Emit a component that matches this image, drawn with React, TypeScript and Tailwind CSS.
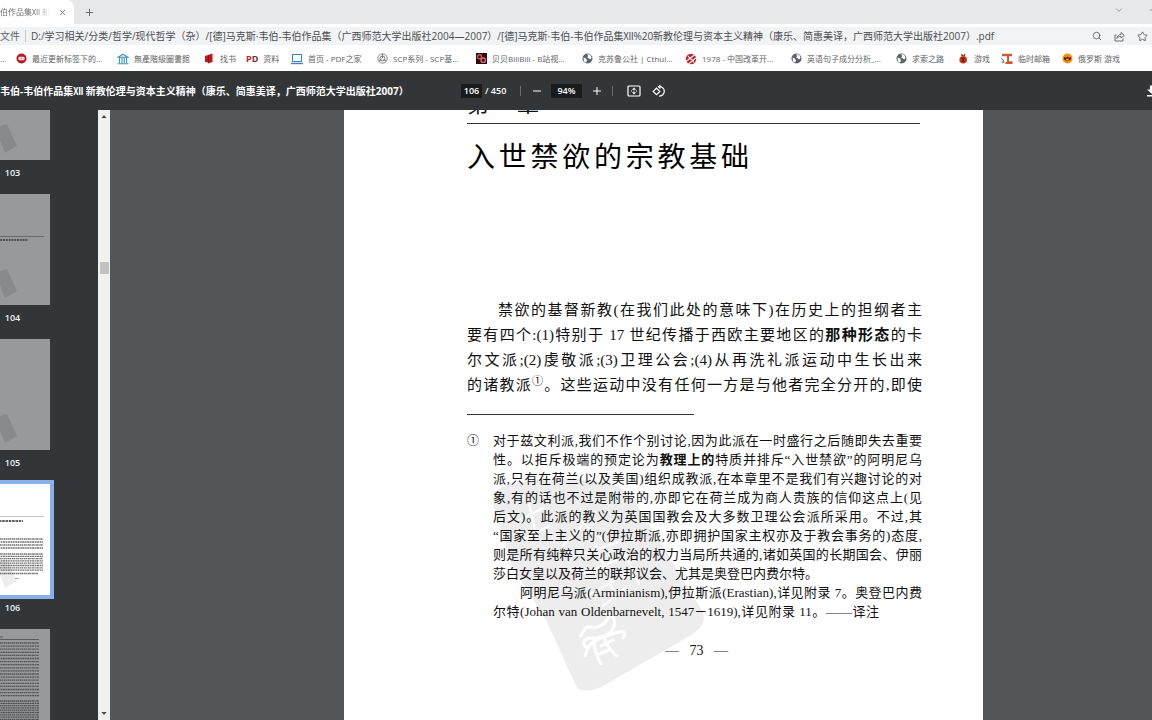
import type { ReactNode } from "react";
import { ChevronDown, Minus, Plus, Search, Star, X } from "lucide-react";

const UI_FONT = "font-['Open_Sans','Noto_Sans_CJK_SC',sans-serif]";
const BOOK_FONT = "font-['Liberation_Serif','Noto_Sans_CJK_SC',serif]";

function Globe() {
  return (
    <svg viewBox="0 0 11 11" className="size-[11px]">
      <circle cx="5.5" cy="5.5" r="5" fill="#5f6368" />
      <path d="M1.5 4.5 4 5.5 5 7.5 4 9.6 2 8.4ZM5 1.2 8 1.6 9.6 4.4 8.4 6.6 7 5.6 5.2 4.6 6.2 3Z" fill="#fff" />
    </svg>
  );
}

const icons: Record<string, ReactNode> = {
  globe: <Globe />,
  stop: (
    <svg viewBox="0 0 11 11" className="size-[11px]">
      <circle cx="5.5" cy="5.5" r="5" fill="#b3191f" />
      <rect x="2.5" y="3.8" width="6" height="3.4" rx="1" fill="#fff" />
      <path d="M4 4.6v1.8M5.5 4.6v1.8M7 4.6v1.8" stroke="#b3191f" strokeWidth=".5" />
    </svg>
  ),
  library: (
    <svg viewBox="0 0 12 12" className="size-3" fill="none" stroke="#3d94c4" strokeWidth="1.1">
      <path d="M1 4.2 6 1.2l5 3zM2.5 4.5V10M5 4.5V10M7.2 4.5V10M9.6 4.5V10M.5 10.8h11" />
    </svg>
  ),
  book: (
    <svg viewBox="0 0 11 11" className="size-[11px]">
      <path d="M1 3 4 2v7.500L1 9ZM4 2 8.500.5v8.500L4 10.500Z" fill="#c4161c" />
      <path d="M4 2.600l1 .5v6l-1-.4z" fill="#7c0f12" />
    </svg>
  ),
  laptop: (
    <svg viewBox="0 0 12 12" className="size-3" fill="none" stroke="#3a84b8">
      <rect x="1.5" y="1.5" width="9" height="7" />
      <path d="M0 10.5h12" strokeWidth="1.4" />
    </svg>
  ),
  scp: (
    <svg viewBox="0 0 11 11" className="size-[11px]" fill="none" stroke="#6b6b6b">
      <circle cx="5.5" cy="5.5" r="4.7" strokeWidth=".8" />
      <circle cx="5.5" cy="5.5" r="2.5" strokeWidth=".9" />
      <path d="M5.5 1v4M1.8 8l3-2M9.2 8l-3-2" strokeWidth=".9" />
    </svg>
  ),
  bili: (
    <svg viewBox="0 0 11 11" className="size-[11px]">
      <rect width="11" height="11" fill="#2a0d10" />
      <circle cx="3.5" cy="3.8" r="2" fill="none" stroke="#d2545b" strokeWidth="1.4" />
      <circle cx="7.2" cy="7.2" r="2.2" fill="none" stroke="#e26b6f" strokeWidth="1.4" />
    </svg>
  ),
  reform: (
    <svg viewBox="0 0 12 12" className="size-3">
      <circle cx="6" cy="6" r="5.2" fill="#c2202b" />
      <path d="M1 8.5 10 1.5M3.5 11 11 4.8M3 3l3 3.4M6.5 6 9 9.5" stroke="#fff" strokeWidth="1.1" />
    </svg>
  ),
  game: (
    <svg viewBox="0 0 11 11" className="size-[11px]">
      <path d="M3 .4 5.200 2 7.400.4 7 3H3.400Z" fill="#b9311c" />
      <circle cx="5.2" cy="6.8" r="3.800" fill="#c5371d" />
      <path d="M3.4 5.6h3.6M5.2 4.4v4.2M3.5 8.2h3.4" stroke="#5c1208" strokeWidth=".8" />
    </svg>
  ),
  mail: (
    <svg viewBox="0 0 12 12" className="size-3">
      <path d="M1 .8h10v2.4H8v5h3.5V11H4.4V9H6V3.2H1Z" fill="#cf5b32" />
      <path d="M.4 5.2 3 8M.4 9h3" stroke="#456" strokeWidth="1" />
    </svg>
  ),
  russia: (
    <svg viewBox="0 0 11 11" className="size-[11px]">
      <circle cx="5.5" cy="5.5" r="5" fill="#f0920f" />
      <path d="M2 4 4 4.800 5.5 3.4 7 4.8 9 4v2.300L7.400 7.600H3.600L2 6.300Z" fill="#6d1608" />
      <path d="M4.2 6.3h2.6" stroke="#ffd24a" strokeWidth="1" />
    </svg>
  ),
};

const bookmarks = [
  { icon: "stop", title: "最近更新标签下的...", width: "w-[101px]" },
  { icon: "library", title: "無產階級圖書館", width: "w-[87px]" },
  { icon: "book", title: "找书", width: "w-[42px]" },
  { icon: "pd", title: "资料", width: "w-[45px]" },
  { icon: "laptop", title: "首页 - PDF之家", width: "w-[86px]" },
  { icon: "scp", title: "SCP系列 - SCP基...", width: "w-[99px]" },
  { icon: "bili", title: "贝贝BiliBili - B站视...", width: "w-[106px]" },
  { icon: "globe", title: "克苏鲁公社 | Cthul...", width: "w-[103px]" },
  { icon: "reform", title: "1978 - 中国改革开...", width: "w-[106px]" },
  { icon: "globe", title: "英语句子成分分析_...", width: "w-[105px]" },
  { icon: "globe", title: "求索之路", width: "w-[62px]" },
  { icon: "game", title: "游戏", width: "w-[43px]" },
  { icon: "mail", title: "临时邮箱", width: "w-[61px]" },
  { icon: "russia", title: "俄罗斯 游戏", width: "w-[66px]" },
];

function BrowserChrome() {
  return (
    <header className="shrink-0 bg-white leading-4 text-[#5f6368]">
      <div className="flex h-6 items-end bg-[#e7e8ea]">
        <div className="flex h-6 w-[74px] items-center justify-between rounded-tr-lg bg-white pr-[7px]">
          <span className="bg-linear-to-r from-[#63666a] from-70% to-white bg-clip-text text-[8px] whitespace-nowrap text-transparent">
            伯作品集Ⅻ 新
          </span>
          <button aria-label="关闭标签页"><X className="size-[9px]" /></button>
        </div>
        <button aria-label="新标签页" className="ml-2.5 flex h-6 items-center"><Plus className="size-[11px]" /></button>
        <div className="ml-auto flex h-6 items-center gap-6 overflow-hidden pb-1 text-[#8a8d91]">
          <button aria-label="搜索标签页"><ChevronDown className="size-2.5" /></button>
          <button aria-label="最小化" className="-mr-1.5"><Minus className="size-2.5" /></button>
        </div>
      </div>

      <div className="flex h-[22px] items-center pt-0.5">
        <div className="flex h-[18px] min-w-0 flex-1 items-center bg-[#f1f3f4] text-[10px]">
          <span className="w-[25px] shrink-0">文件</span>
          <span className="h-3 w-px shrink-0 bg-[#c4c7ca]" />
          <input
            aria-label="地址"
            readOnly
            className="h-4 min-w-0 flex-1 bg-transparent pl-[5px] text-[#4a4d51] outline-none"
            value="D:/学习相关/分类/哲学/现代哲学（杂）/[德]马克斯·韦伯-韦伯作品集（广西师范大学出版社2004—2007）/[德]马克斯·韦伯-韦伯作品集Ⅻ%20新教伦理与资本主义精神（康乐、简惠美译，广西师范大学出版社2007）.pdf"
          />
          <div className="flex shrink-0 items-center gap-3 pr-1">
            <button aria-label="缩放"><Search className="size-2.5" /></button>
            <button aria-label="分享">
              <svg viewBox="0 0 11 11" className="size-[11px]" fill="none" stroke="currentColor" strokeWidth=".9">
                <path d="M2.5 4H1v6h8V7.5M3 7.5C3.2 5 4.6 3.5 7 3.5V1.5L10.3 4.4 7 7V5.3C5.2 5.3 4 6 3 7.5Z" />
              </svg>
            </button>
            <button aria-label="收藏"><Star className="size-[11px]" /></button>
          </div>
        </div>
      </div>

      <nav className="flex h-[25px] items-center overflow-hidden text-[8px] whitespace-nowrap">
        <span className="w-4 shrink-0">...</span>
        {bookmarks.map((b) => (
          <a key={b.title} href="#" className={`flex shrink-0 items-center gap-[5px] ${b.width}`}>
            {b.icon === "pd" ? (
              <span className="text-[9px] font-bold"><span className="text-[#c2202b]">P</span><span className="text-[#7c2a35]">D</span></span>
            ) : (
              icons[b.icon]
            )}
            {b.title}
          </a>
        ))}
      </nav>
    </header>
  );
}

function PdfToolbar() {
  return (
    <div className="flex h-[39px] shrink-0 items-center bg-[#323639] text-[9px] leading-4 font-semibold text-white">
      <h1 className="w-[461px] shrink-0 text-[10px] font-bold whitespace-nowrap">
        韦伯-韦伯作品集Ⅻ 新教伦理与资本主义精神（康乐、简惠美译，广西师范大学出版社2007）
      </h1>
      <input aria-label="页码" defaultValue="106" className="h-3.5 w-[21px] bg-[#191b1c] text-center outline-none" />
      <span className="w-[38px] pl-[3px]">/ 450</span>
      <span className="h-2.5 w-px bg-[#6b6e70]" />
      <button aria-label="缩小" className="ml-2.5"><Minus className="size-3" /></button>
      <input aria-label="缩放比例" defaultValue="94%" className="ml-2 h-3.5 w-[31px] bg-[#191b1c] text-center outline-none" />
      <button aria-label="放大" className="ml-[9px]"><Plus className="size-3" /></button>
      <span className="ml-[9px] h-2.5 w-px bg-[#6b6e70]" />
      <button aria-label="适合页面大小" className="ml-[14px]">
        <svg viewBox="0 0 14 12" className="h-3 w-3.5">
          <rect x="1" y="1" width="12" height="10" rx="1" fill="none" stroke="#fff" strokeWidth="1.2" />
          <path d="M7 2.4 9 4.8H5ZM7 9.6 5 7.2h4ZM4 5.5h1v1H4ZM9 5.5h1v1H9ZM6.5 5.5h1v1h-1Z" fill="#fff" />
        </svg>
      </button>
      <button aria-label="逆时针旋转" className="ml-[11px]">
        <svg viewBox="0 0 14 14" className="size-3.5" fill="none" stroke="#fff" strokeWidth="1.2">
          <path d="M4.5 4.2 7.8 7.4 4.5 10.6 1.2 7.4ZM6.4 2.8A4.7 4.7 0 1 1 7 12" />
          <path d="M8.4.4 5.6 2.8 8.4 5.2Z" fill="#fff" stroke="none" />
        </svg>
      </button>
      <button aria-label="下载" className="-mr-1.5 ml-auto">
        <svg viewBox="0 0 12 12" className="size-3" fill="#fff">
          <path d="M4 .5h4v4h3L6 9 1 4.500h3ZM1 10h10v1.500H1Z" />
        </svg>
      </button>
    </div>
  );
}

function TextRows({ y, count, step, right = 68, opacity = 0.6 }: { y: number; count: number; step: number; right?: number; opacity?: number }) {
  return (
    <g stroke="#111" strokeWidth="1.3" opacity={opacity}>
      {Array.from({ length: count }, (_, i) => (
        <path key={i} d={`M6 ${y + i * step}H${right}`} strokeDasharray={i % 2 ? "1.6 .5 2.2 .6" : "1.3 .6 1.8 .4"} />
      ))}
    </g>
  );
}

const thumbnails = [
  { page: 103, art: null, mark: true },
  {
    page: 104,
    mark: true,
    art: (
      <g stroke="#222">
        <path d="M6 42.500h63" strokeWidth=".4" />
        <path d="M14 46h39" strokeWidth="2" strokeDasharray="2 .8" opacity=".6" />
      </g>
    ),
  },
  { page: 105, art: null, mark: true },
  {
    page: 106,
    mark: true,
    art: (
      <>
        <path d="M6 32.500h63" stroke="#888" strokeWidth=".5" />
        <path d="M14 37h34" stroke="#222" strokeWidth="2.200" strokeDasharray="2.600 .7" opacity=".7" />
        <TextRows y={55} count={4} step={3} />
        <TextRows y={70} count={8} step={2.3} />
        <TextRows y={89.500} count={1} step={2} right={63} />
        <path d="M40 94.500h4" stroke="#888" strokeWidth=".7" />
      </>
    ),
  },
  {
    page: 107,
    mark: false,
    art: (
      <>
        <path d="M6 8h22M6 10.500h58" stroke="#333" strokeWidth=".6" />
        <TextRows y={14} count={18} step={3.1} right={64} opacity={0.5} />
        <TextRows y={72} count={12} step={2.300} right={64} opacity={0.55} />
      </>
    ),
  },
];

function Sidebar() {
  return (
    <>
      <nav aria-label="缩略图" className="flex w-[98px] shrink-0 flex-col overflow-hidden bg-[#323639]">
        {thumbnails.map((t) => {
          const active = t.page === 106;
          return (
            <button
              key={t.page}
              className={`-ml-[25px] block w-[75px] shrink-0 text-[9px] font-semibold text-[#f1f1f1] ${t.page === 103 ? "-mt-[61px]" : ""}`}
            >
              <svg
                viewBox="0 0 75 111"
                className={`block h-[111px] w-[75px] ${active ? "bg-white ring-4 ring-[#8ab0ea]" : "bg-[#98999b]"}`}
              >
                {t.mark && <path d="M20 79 32 75 42 97 30 104Z" fill="#000" opacity={active ? 0.07 : 0.1} />}
                {t.art}
              </svg>
              <span className="block h-[34px] pt-1 leading-[18px]">{t.page}</span>
            </button>
          );
        })}
      </nav>
      <div className="flex w-3 shrink-0 flex-col items-center bg-[#f1f1ef] py-1">
        <svg viewBox="0 0 6 4" className="h-1 w-1.5"><path d="M.5 4 3 1l2.500 3Z" fill="#444" /></svg>
        <span className="mt-36 h-3 w-[9px] bg-[#c1c1c1]" />
        <svg viewBox="0 0 6 4" className="mt-auto h-1 w-1.5"><path d="M.5 0 3 3 5.500 0Z" fill="#444" /></svg>
      </div>
    </>
  );
}

function Watermark() {
  return (
    <svg viewBox="0 0 216 216" className="absolute top-[385px] left-[147px] size-[216px]" fill="none">
      <path
        d="M2 26Q0 12 14 8Q60-4 112 4Q136 8 148 30L212 134Q216 146 202 156L112 208Q96 216 86 210L56 144L20 86Z"
        fill="#ededed"
      />
      <g stroke="#fff" strokeWidth="3" strokeLinecap="round" strokeLinejoin="round">
        <path d="M28 42 52 30M38 26 46 60M32 62 58 48M104 34 72 68M84 38 112 62" strokeWidth="2" />
        <path d="M84 78 128 64M92 96 136 78M104 66 122 112M96 118 146 90M132 72 148 106M112 128 134 110" strokeWidth="2" />
        <path d="M90 158Q94 146 102 150Q116 148 118 136Q128 142 120 154Q110 162 98 160Q88 164 96 170Q104 160 128 154Q136 152 132 160M94 178Q98 164 106 162M102 160Q104 176 110 186M112 158Q118 172 126 178M110 168 122 162M108 176 118 172" />
      </g>
    </svg>
  );
}

const bodyLines: ReactNode[] = [
  "禁欲的基督新教(在我们此处的意味下)在历史上的担纲者主",
  <>要有四个:(1)特别于 17 世纪传播于西欧主要地区的<b>那种形态</b>的卡</>,
  "尔文派;(2)虔敬派;(3)卫理公会;(4)从再洗礼派运动中生长出来",
  <>的诸教派<sup className="text-[11px] leading-none">①</sup>。这些运动中没有任何一方是与他者完全分开的,即使</>,
];

const noteLines: ReactNode[] = [
  "对于兹文利派,我们不作个别讨论,因为此派在一时盛行之后随即失去重要",
  <>性。以拒斥极端的预定论为<b>教理上的</b>特质并排斥“入世禁欲”的阿明尼乌</>,
  "派,只有在荷兰(以及美国)组织成教派,在本章里不是我们有兴趣讨论的对",
  "象,有的话也不过是附带的,亦即它在荷兰成为商人贵族的信仰这点上(见",
  "后文)。此派的教义为英国国教会及大多数卫理公会派所采用。不过,其",
  "“国家至上主义的”(伊拉斯派,亦即拥护国家主权亦及于教会事务的)态度,",
  "则是所有纯粹只关心政治的权力当局所共通的,诸如英国的长期国会、伊丽",
];

function BookPage() {
  return (
    <article className={`relative ml-[234px] w-[639px] bg-white pr-[61px] pl-[123px] text-[#111] ${BOOK_FONT}`}>
      <Watermark />
      <div className="relative">
        <h2 className="-mt-[17px] w-[72px] text-[22px] leading-6 whitespace-nowrap [text-align-last:justify]">第一章</h2>
        <hr className="mt-1.5 mr-0.5 border-[#333]" />
        <h1 className="mt-[14px] w-[282px] text-[28px] leading-10 whitespace-nowrap text-black [text-align-last:justify]">入世禁欲的宗教基础</h1>

        <div className="mt-[120px] text-[15px] leading-[25px] whitespace-nowrap">
          {bodyLines.map((line, i) => (
            <p key={i} className={`[text-align-last:justify] ${i === 0 ? "pl-[31px]" : ""}`}>{line}</p>
          ))}
        </div>

        <hr className="mt-4 w-[227px] border-[#333]" />

        <div className="mt-4 flex text-[13px] leading-[19px]">
          <span className="w-[26px] shrink-0 pt-px text-[12px]">①</span>
          <div className="min-w-0 flex-1 whitespace-nowrap">
            {noteLines.map((line, i) => (
              <p key={i} className="[text-align-last:justify]">{line}</p>
            ))}
            <p className="w-[323px] [text-align-last:justify]">莎白女皇以及荷兰的联邦议会、尤其是奥登巴内费尔特。</p>
            <p className="pl-[27px] [text-align-last:justify]">阿明尼乌派(Arminianism),伊拉斯派(Erastian),详见附录 7。奥登巴内费</p>
            <p className="w-[386px] [text-align-last:justify]">尔特(Johan van Oldenbarnevelt, 1547－1619),详见附录 11。——译注</p>
          </div>
        </div>

        <p className="mt-5 pb-32 pl-1 text-center text-[14px] leading-5 whitespace-pre">—   73   —</p>
      </div>
    </article>
  );
}

export default function App() {
  return (
    <div className={`flex h-screen flex-col overflow-hidden ${UI_FONT}`}>
      <BrowserChrome />
      <PdfToolbar />
      <div className="flex min-h-0 flex-1">
        <Sidebar />
        <main className="min-w-0 flex-1 overflow-hidden bg-[#525659]">
          <BookPage />
        </main>
      </div>
    </div>
  );
}
